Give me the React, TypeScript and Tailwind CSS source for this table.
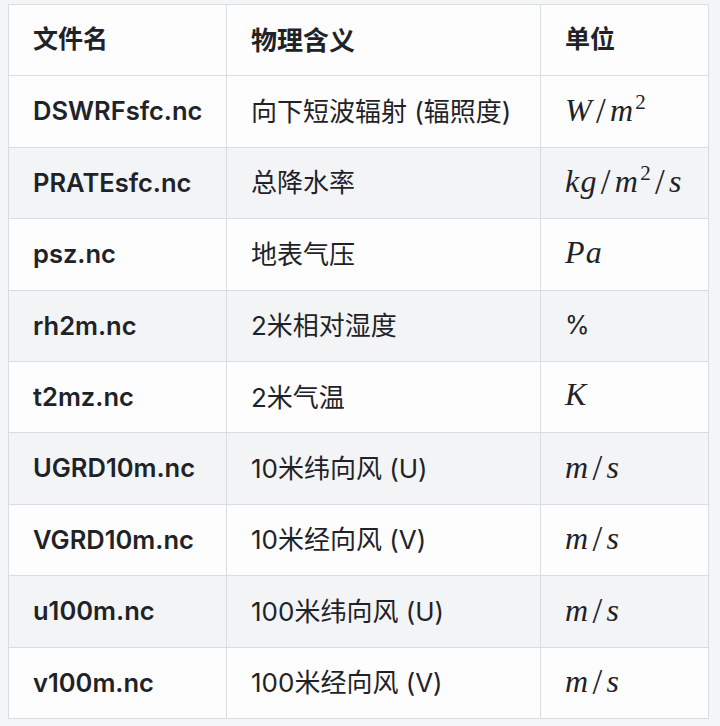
import React from 'react';

type Row = {
  file: string;
  meaning: string;
  unit: React.ReactNode;
};

// KaTeX-like inline math: serif italic, long upright slash
const Slash = () => (
  <span className="inline-block px-[3px] not-italic text-[35px] leading-none translate-y-[2px]">/</span>
);

const Math: React.FC<{ children: React.ReactNode }> = ({ children }) => (
  <span className="italic text-[32px] tracking-[0.04em] leading-none [font-family:'Liberation_Serif',serif]">
    {children}
  </span>
);

const Sup: React.FC<{ children: React.ReactNode }> = ({ children }) => (
  <sup className="not-italic text-[21px] relative -top-[12px] ml-[1px]">{children}</sup>
);

const ms = (
  <Math>
    m<Slash />s
  </Math>
);

const ROWS: Row[] = [
  {
    file: 'DSWRFsfc.nc',
    meaning: '向下短波辐射 (辐照度)',
    unit: (
      <Math>
        W<Slash />m<Sup>2</Sup>
      </Math>
    ),
  },
  {
    file: 'PRATEsfc.nc',
    meaning: '总降水率',
    unit: (
      <Math>
        kg<Slash />m<Sup>2</Sup>
        <Slash />s
      </Math>
    ),
  },
  { file: 'psz.nc', meaning: '地表气压', unit: <Math>Pa</Math> },
  { file: 'rh2m.nc', meaning: '2米相对湿度', unit: <span>%</span> },
  { file: 't2mz.nc', meaning: '2米气温', unit: <Math>K</Math> },
  { file: 'UGRD10m.nc', meaning: '10米纬向风 (U)', unit: ms },
  { file: 'VGRD10m.nc', meaning: '10米经向风 (V)', unit: ms },
  { file: 'u100m.nc', meaning: '100米纬向风 (U)', unit: ms },
  { file: 'v100m.nc', meaning: '100米经向风 (V)', unit: ms },
];

const cell = 'border border-[#d8dde3] px-6 align-middle';

export default function App() {
  return (
    <div className="w-[720px] h-[726px] bg-[#f4f5f7] pt-[4px] pl-[8px] text-[#1f2328] text-[25px] [font-family:Inter,'Noto_Sans_CJK_SC',sans-serif]">
      <table className="table-fixed border-collapse w-[700px]">
        <colgroup>
          <col className="w-[218px]" />
          <col className="w-[314px]" />
          <col className="w-[168px]" />
        </colgroup>
        <thead>
          <tr className="h-[71.4px] bg-[#fdfdfd]">
            <th className={`${cell} text-left font-bold`}>文件名</th>
            <th className={`${cell} text-left font-bold text-[26px]`}>物理含义</th>
            <th className={`${cell} text-left font-bold`}>单位</th>
          </tr>
        </thead>
        <tbody>
          {ROWS.map((r, i) => (
            <tr key={r.file} className={`h-[71.4px] ${i % 2 === 1 ? 'bg-[#f3f4f6]' : 'bg-[#fdfdfd]'}`}>
              <td className={`${cell} font-semibold whitespace-nowrap text-[25.5px]`}>{r.file}</td>
              <td className={`${cell} whitespace-nowrap text-[26px]`}>{r.meaning}</td>
              <td className={`${cell} whitespace-nowrap`}>{r.unit}</td>
            </tr>
          ))}
        </tbody>
      </table>
    </div>
  );
}
